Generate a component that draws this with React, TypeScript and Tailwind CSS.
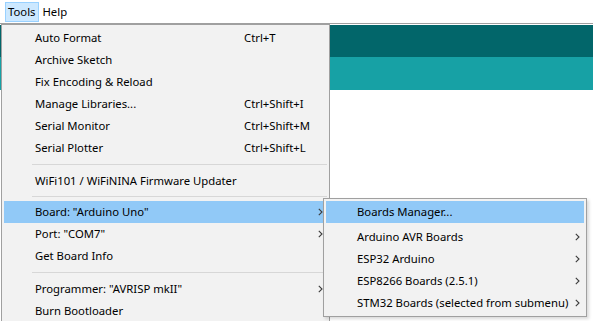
import React from 'react'

type Item =
  | { kind: 'item'; label: string; shortcut?: string; sub?: boolean; active?: boolean }
  | { kind: 'sep'; h: number }

const toolsMenu: Item[] = [
  { kind: 'item', label: 'Auto Format', shortcut: 'Ctrl+T' },
  { kind: 'item', label: 'Archive Sketch' },
  { kind: 'item', label: 'Fix Encoding & Reload' },
  { kind: 'item', label: 'Manage Libraries...', shortcut: 'Ctrl+Shift+I' },
  { kind: 'item', label: 'Serial Monitor', shortcut: 'Ctrl+Shift+M' },
  { kind: 'item', label: 'Serial Plotter', shortcut: 'Ctrl+Shift+L' },
  { kind: 'sep', h: 11 },
  { kind: 'item', label: 'WiFi101 / WiFiNINA Firmware Updater' },
  { kind: 'sep', h: 9 },
  { kind: 'item', label: 'Board: "Arduino Uno"', sub: true, active: true },
  { kind: 'item', label: 'Port: "COM7"', sub: true },
  { kind: 'item', label: 'Get Board Info' },
  { kind: 'sep', h: 11 },
  { kind: 'item', label: 'Programmer: "AVRISP mkII"', sub: true },
  { kind: 'item', label: 'Burn Bootloader' },
]

const boardsMenu = [
  { label: 'Boards Manager...', active: true },
  { label: 'Arduino AVR Boards', sub: true },
  { label: 'ESP32 Arduino', sub: true },
  { label: 'ESP8266 Boards (2.5.1)', sub: true },
  { label: 'STM32 Boards (selected from submenu)', sub: true },
]

function Chevron() {
  return (
    <svg width="5" height="8" viewBox="0 0 5 8" className="shrink-0">
      <path d="M0.8 0.8 L4 4 L0.8 7.2" fill="none" stroke="#3c3c3c" strokeWidth="1.1" />
    </svg>
  )
}

export default function App() {
  return (
    <div
      className="relative h-[321px] w-[593px] overflow-hidden bg-white text-[11.3px] text-black"
      style={{ fontFamily: '"Noto Sans", "Open Sans", sans-serif' }}
    >
      {/* menubar */}
      <div className="flex h-[24px] items-center border-b border-[#a0a0a0] pl-[5px]">
        <div className="flex h-[20px] items-center border border-[#99d1ff] bg-[#cce8ff] px-[2px] leading-none">
          Tools
        </div>
        <div className="ml-[4px] leading-none">Help</div>
      </div>

      {/* editor toolbar bars behind the menu */}
      <div className="mt-[1px] h-[32px] bg-[#02666a]" />
      <div className="h-[33px] bg-[#17a1a5]" />

      {/* Tools menu */}
      <div className="absolute left-[1px] top-[24px] w-[329px] border border-[#a0a0a0] bg-[#f2f2f2] px-[2px] pt-[2px]">
        {toolsMenu.map((it, i) =>
          it.kind === 'sep' ? (
            <div key={i} className="flex items-center pl-[28px]" style={{ height: it.h }}>
              <div className="h-px flex-1 bg-[#d7d7d7]" />
            </div>
          ) : (
            <div
              key={i}
              className={`flex h-[22px] items-center pl-[31px] pr-[4px] leading-none ${it.active ? 'bg-[#91c9f7]' : ''}`}
            >
              <span className="w-[209px] shrink-0 whitespace-nowrap">{it.label}</span>
              <span className="flex-1 whitespace-nowrap">{it.shortcut ?? ''}</span>
              {it.sub && <Chevron />}
            </div>
          ),
        )}
      </div>

      {/* Board submenu */}
      <div className="absolute left-[323px] top-[198px] w-[264px] border border-[#a0a0a0] bg-[#f2f2f2] p-[2px] shadow-[2px_2px_3px_rgba(0,0,0,0.15)]">
        {boardsMenu.map((b, i) => (
          <div
            key={i}
            className={`flex h-[22px] items-center pl-[31px] pr-[4px] leading-none ${b.active ? 'mb-[3px] bg-[#91c9f7]' : ''}`}
          >
            <span className="flex-1 whitespace-nowrap">{b.label}</span>
            {b.sub && <Chevron />}
          </div>
        ))}
      </div>
    </div>
  )
}
